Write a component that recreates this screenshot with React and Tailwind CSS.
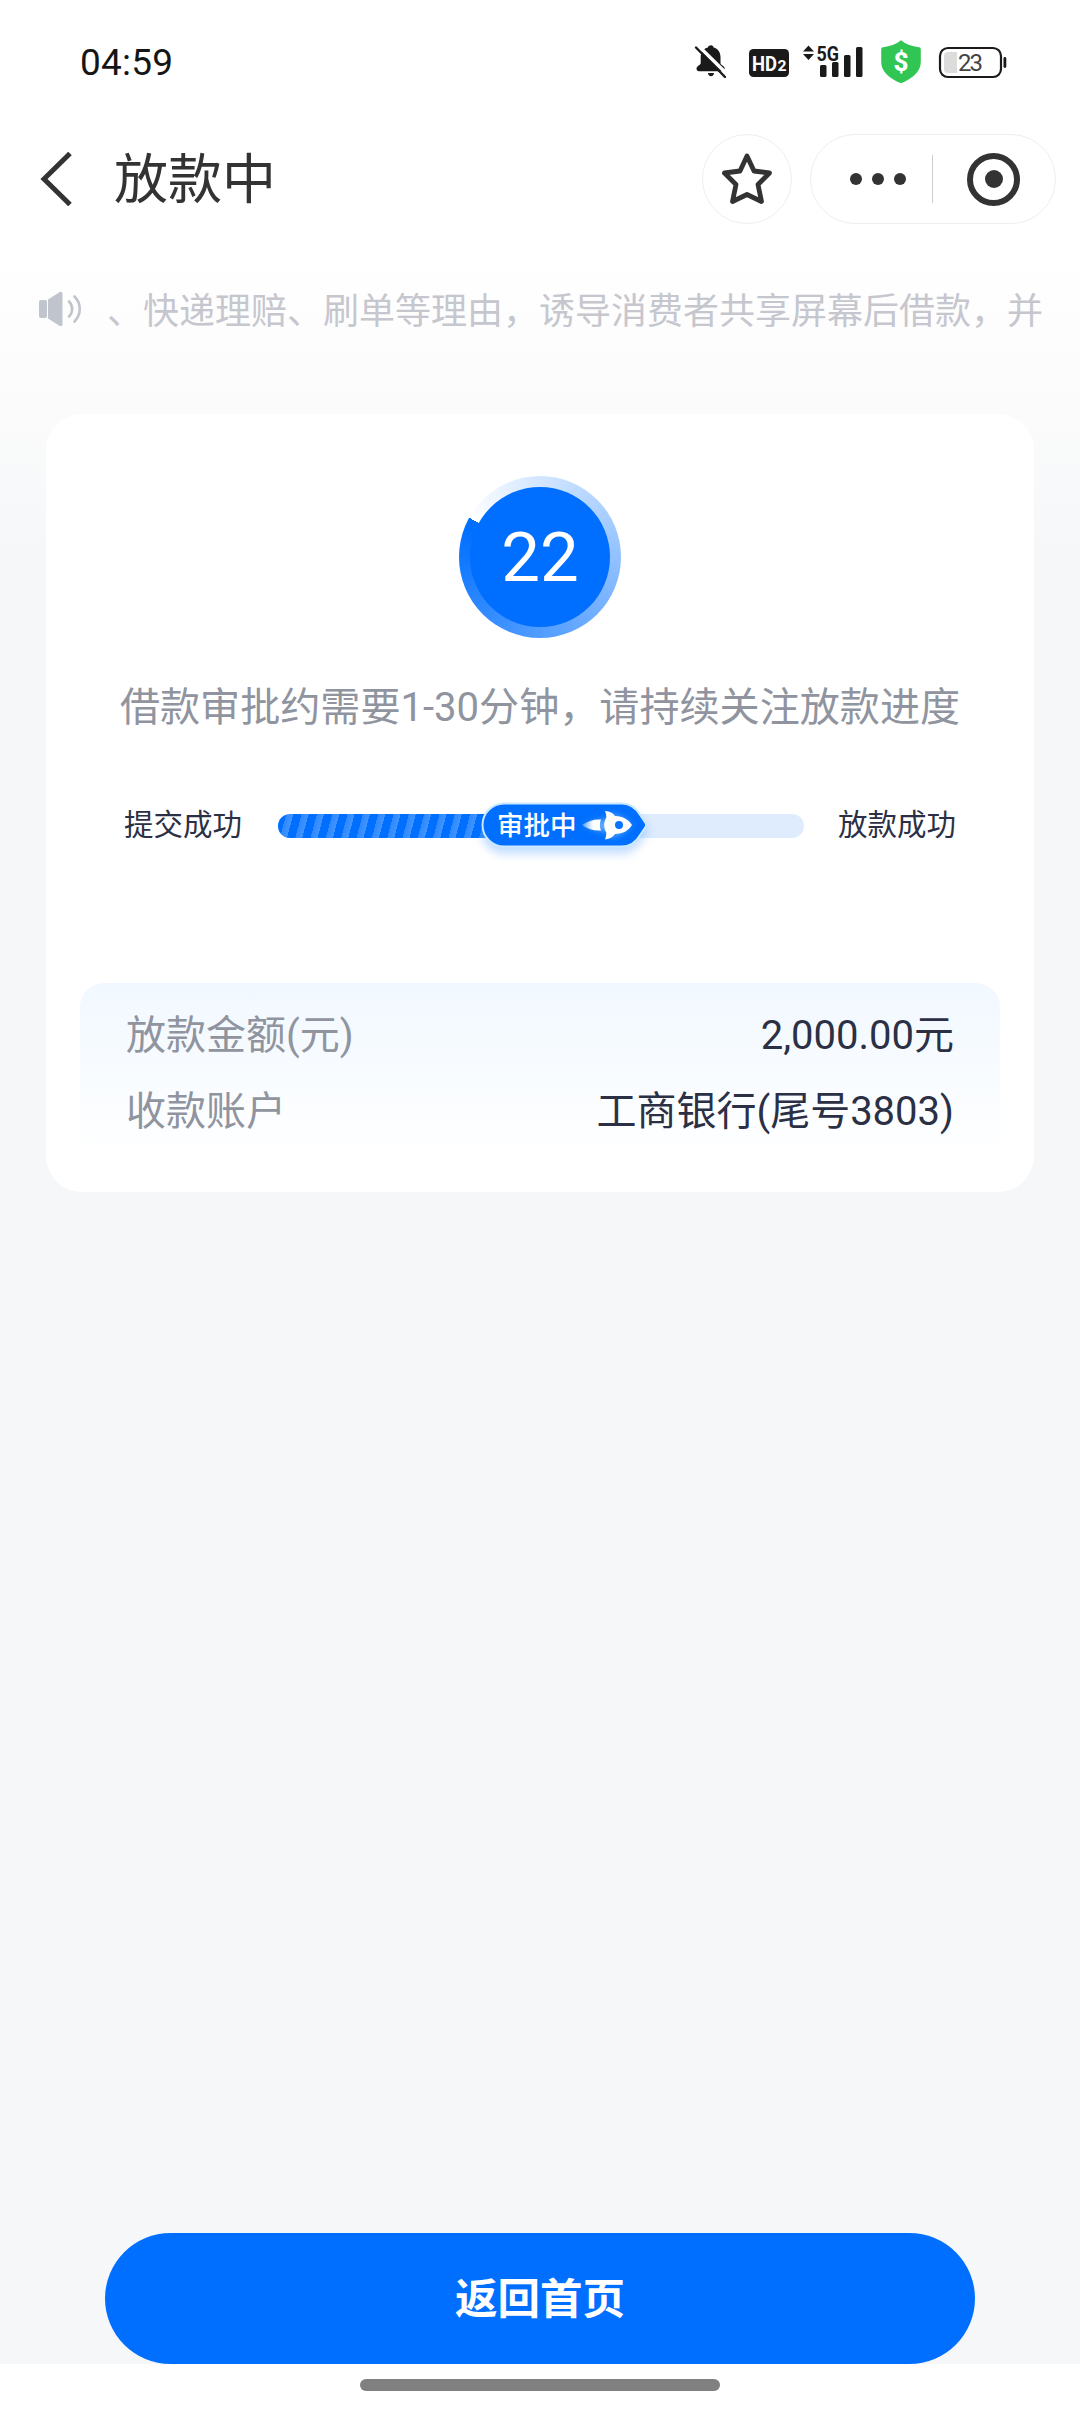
/**
 * Loan status page: countdown, review progress and payout summary.
 */

const details = [
  { label: '放款金额(元)', value: '2,000.00元' },
  { label: '收款账户', value: '工商银行(尾号3803)' },
];

function StatusBar() {
  return (
    <div className="flex h-[124px] items-center pl-20 text-[#151515]">
      <span className="text-[37px] leading-none tracking-[0.2px]">04:59</span>
      <svg className="ml-auto shrink-0" width="400" height="45" viewBox="0 0 400 45" fill="#1a1a1a">
        {/* muted bell */}
        <path d="M31 5.300c1.500 0 2.400 1 2.600 2.100 4.400 1.300 6.900 4.800 6.900 9.300v6.300c0 2.300 4.200 2.800 4.200 5.600 0 1.700-1 2.600-2.400 2.600H19c-1.500 0-2.500-1-2.500-2.500 0-2.900 4.200-3.400 4.200-5.700v-6.300c0-4.500 2.700-8 7.200-9.300.2-1.100 1.300-2.100 3.100-2.100z" />
        <path d="M28 33h6c0 2-1.200 3.200-3 3.200S28 35 28 33z" />
        <path d="M17 4.500 50 37" stroke="#fff" strokeWidth="3.500" />
        <path d="M16 7.500 45 37" stroke="#1a1a1a" strokeWidth="2.400" strokeLinecap="round" />
        {/* HD badge */}
        <rect x="69" y="9" width="40" height="28" rx="4.500" />
        <text x="72" y="31" fill="#fff" fontSize="21" fontWeight="700" textLength="25" lengthAdjust="spacingAndGlyphs">HD</text>
        <text x="97.500" y="31" fill="#fff" fontSize="14" fontWeight="700" textLength="9" lengthAdjust="spacingAndGlyphs">2</text>
        {/* signal */}
        <path d="m128.500 5.500 5.500 6h-11zM128.500 20l5.500-6h-11z" />
        <rect x="140" y="25" width="6.500" height="12" rx="1.500" />
        <rect x="152" y="22" width="6.500" height="15" rx="1.500" />
        <rect x="164" y="15" width="6.500" height="22" rx="1.500" />
        <rect x="176" y="7" width="6.500" height="30" rx="1.500" />
        <text x="136.500" y="20.500" fontSize="21" fontWeight="700" textLength="22.500" lengthAdjust="spacingAndGlyphs">5G</text>
        {/* payment shield */}
        <path d="M221 0.300c5 4.200 11 6 18 7 1.300.2 1.800 1 1.800 2.200V22c0 10-8.300 16.500-19.800 21.300C209.500 38.500 201.200 32 201.200 22V9.500c0-1.200.5-2 1.800-2.200 7-1 13-2.800 18-7z" fill="#31c653" />
        <text x="221" y="30.500" textAnchor="middle" fill="#fff" fontSize="26" fontWeight="800">$</text>
        {/* battery */}
        <rect x="260" y="8" width="61" height="29" rx="8" fill="none" stroke="#1a1a1a" strokeWidth="2.200" />
        <path d="M268 12h9v21h-9a4 4 0 0 1-4-4V16a4 4 0 0 1 4-4z" fill="#dcdcdc" />
        <rect x="323.500" y="17" width="2.800" height="11" rx="1.400" />
        <text x="290.500" y="31" textAnchor="middle" fill="#444" fontSize="24" textLength="25">23</text>
      </svg>
    </div>
  );
}

function NavBar() {
  return (
    <header className="flex h-[110px] items-center pr-6 pl-10 text-[#333]">
      <svg width="32" height="54" viewBox="0 0 32 54" fill="none" stroke="#333" strokeWidth="5">
        <path d="M30 1.500 4 27l26 25.500" />
      </svg>
      <h1 className="ml-[42px] pt-1 text-[54px] leading-none">放款中</h1>
      <div className="ml-auto flex h-[90px] w-[90px] items-center justify-center rounded-full border border-[#eee] bg-white">
        <svg width="50" height="52" viewBox="0 0 50 52" fill="none" stroke="#333" strokeWidth="4.800" strokeLinejoin="round">
          <path d="m25 3 7 15 15.500 2-11.500 11.500 3.500 17L25 41.500l-14.500 7 3.500-17L2.500 20 18 18z" />
        </svg>
      </div>
      <div className="ml-[18px] flex h-[90px] w-[246px] items-center rounded-full border border-[#eee] bg-white">
        <div className="ml-[39px] flex gap-[10px]">
          <i className="h-3 w-3 rounded-full bg-[#333]" />
          <i className="h-3 w-3 rounded-full bg-[#333]" />
          <i className="h-3 w-3 rounded-full bg-[#333]" />
        </div>
        <div className="ml-[26px] h-12 w-px bg-[#ccc]" />
        <div className="ml-[34px] flex h-[53px] w-[53px] items-center justify-center rounded-full border-6 border-[#333]">
          <i className="h-[18px] w-[18px] rounded-full bg-[#333]" />
        </div>
      </div>
    </header>
  );
}

function Notice() {
  return (
    <div className="flex h-[150px] items-center pl-[38px] text-[#c6c7ce]">
      <svg className="shrink-0" width="44" height="36" viewBox="0 0 44 36" fill="#c0c4cc">
        <rect x="1" y="9" width="8" height="18" rx="2" />
        <path d="M10 8.500 21.500 1.200c1.500-.9 3-.2 3 1.600v30.400c0 1.800-1.500 2.500-3 1.600L10 27.500z" />
        <path d="M31 10.500c4.200 4 4.200 11 0 15M36.500 5.500c7 7 7 18 0 25" fill="none" stroke="#c0c4cc" strokeWidth="2.600" strokeLinecap="round" />
      </svg>
      <p className="ml-[25px] pt-[5px] text-[36px] leading-[54px] whitespace-nowrap">
        、快递理赔、刷单等理由，诱导消费者共享屏幕后借款，并
      </p>
    </div>
  );
}

function Countdown({ seconds }) {
  return (
    <div className="flex h-[162px] w-[162px] items-center justify-center rounded-full bg-[conic-gradient(from_-61deg,#fff,#006fff_98%)]">
      <div className="flex h-[140px] w-[140px] items-center justify-center rounded-full bg-[#006fff] text-[69px] leading-none text-white">
        {seconds}
      </div>
    </div>
  );
}

function Rocket() {
  return (
    <svg className="overflow-visible" width="52" height="32" viewBox="0 0 52 32">
      <defs>
        <linearGradient id="flame">
          <stop offset="0" stopColor="#fff" stopOpacity="0.300" />
          <stop offset="0.600" stopColor="#fff" />
        </linearGradient>
        <filter id="glow" x="-30%" y="-30%" width="160%" height="160%">
          <feGaussianBlur stdDeviation="3" />
        </filter>
      </defs>
      <path d="M2 16 20 11h8V4l12 5 9 7-9 8-12 5v-7h-8z" fill="#7fc0ff" opacity="0.800" filter="url(#glow)" />
      <path d="M0 16c6-4 12-6 19-5.500-1.500 3.500-1.500 7.500 0 11C12 22 6 20 0 16z" fill="url(#flame)" />
      <path d="M23 2c5 .5 8 2 10 5 8 0 14 4 17 9-3 5-9 9-17 9-2 3-5 5-10 5.500 1-3 1.500-5 1.300-7-2.800-4.500-2.800-10.500 0-15C24.500 6.500 24 4.500 23 2z" fill="#fff" />
      <circle cx="37" cy="16" r="4" fill="#0a74ff" />
    </svg>
  );
}

function Progress() {
  return (
    <div className="flex h-12 items-center text-[29.5px] leading-none text-[#2b3045]">
      <span className="w-[154px]">提交成功</span>
      <div className="relative h-6 w-[526px] rounded-full bg-[#deecfe]">
        <div className="h-6 w-[230px] rounded-l-full bg-[repeating-linear-gradient(105deg,#006fff_0px,#006fff_8px,#2f88ff_8px,#3f94ff_14.800px)]" />
        {/* current step marker sits over the track */}
        <div className="absolute -top-3 left-[204px]">
          <svg className="overflow-visible drop-shadow-[0_6px_5px_rgba(0,111,255,0.250)]" width="165" height="46" viewBox="0 0 165 46">
            <path d="M22 1.500h118c9 0 15 6 18.500 12l5 7.500q1.300 2 0 4l-5 7.500c-3.500 6-9.500 12-18.500 12H22a21.500 21.500 0 0 1 0-43z" fill="#006fff" stroke="#cbe8ff" strokeWidth="2" />
          </svg>
          <div className="absolute inset-0 flex items-center pl-[15px] text-[26.5px] font-medium whitespace-nowrap text-white">
            <span className="pt-[3px]">审批中</span>
            <span className="ml-[6px]"><Rocket /></span>
          </div>
        </div>
      </div>
      <span className="ml-[34px]">放款成功</span>
    </div>
  );
}

export default function App() {
  return (
    <div className="flex h-[2412px] w-[1080px] flex-col overflow-hidden bg-white font-[Roboto,'Noto_Sans_CJK_SC',sans-serif]">
      <main className="flex h-[2364px] flex-col bg-[linear-gradient(#fff_0px,#fff_250px,#fbfbfb_410px,#f5f7f9_560px)]">
        <StatusBar />
        <NavBar />
        <Notice />

        <section className="mx-[46px] mt-[30px] flex h-[778px] flex-col items-center rounded-[36px] bg-white pt-[62px]">
          <Countdown seconds={22} />
          <p className="mt-[46px] text-[40.1px] leading-[48px] whitespace-nowrap text-[#90949f]">
            借款审批约需要1-30分钟，请持续关注放款进度
          </p>
          <div className="mt-[70px]">
            <Progress />
          </div>
          <dl className="mt-[133px] flex h-[174px] w-[920px] flex-col rounded-3xl bg-linear-to-b from-[#f1f8ff] to-white px-[46px] pt-[15px] text-[40px]">
            {details.map((row) => (
              <div key={row.label} className="flex h-[76px] items-center justify-between">
                <dt className="text-[#90949f]">{row.label}</dt>
                <dd className="text-[#2b3045]">{row.value}</dd>
              </div>
            ))}
          </dl>
        </section>

        <button className="mx-[105px] mt-auto h-[131px] rounded-full bg-[#006fff] pt-0.5 text-[42.5px] font-bold text-white">
          返回首页
        </button>
      </main>
      <div className="mx-auto mt-[15px] h-3 w-[360px] rounded-full bg-[#808080]" />
    </div>
  );
}
